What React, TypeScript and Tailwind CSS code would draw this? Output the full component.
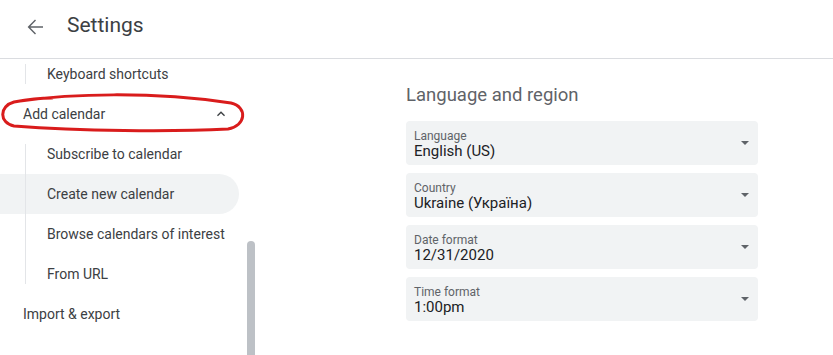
import React from "react"

const fields = [
  { label: "Language", value: "English (US)" },
  { label: "Country", value: "Ukraine (Україна)" },
  { label: "Date format", value: "12/31/2020" },
  { label: "Time format", value: "1:00pm" },
]

const addCalendarItems = [
  "Subscribe to calendar",
  "Create new calendar",
  "Browse calendars of interest",
  "From URL",
]

const BackArrow = () => (
  <svg width="24" height="24" viewBox="0 0 24 24" fill="#5f6368">
    <path d="M20 11.2H7.4l5.6-5.6L12 4.6 4.6 12l7.4 7.4 1-1-5.6-5.6H20v-1.6z" />
  </svg>
)

const ChevronUp = () => (
  <svg width="16" height="16" viewBox="0 0 24 24" fill="#3c4043">
    <path d="M12 8l-6 6 1.41 1.41L12 10.83l4.59 4.58L18 14z" />
  </svg>
)

const DropArrow = () => (
  <svg width="8" height="4" viewBox="0 0 10 5" fill="#5f6368">
    <path d="M0 0l5 5 5-5z" />
  </svg>
)

const SubGroup = ({ children }: { children: React.ReactNode }) => (
  <div className="relative">
    <div className="absolute left-[25px] top-[10px] bottom-[10px] w-px bg-[#e3e5e8] z-10" />
    {children}
  </div>
)

const SubItem = ({ label, active }: { label: string; active?: boolean }) => (
  <div
    className={
      "h-10 w-[239px] flex items-center pl-[47px] text-sm text-[#3c4043] " +
      (active ? "bg-[#f1f3f4] rounded-r-[20px]" : "")
    }
  >
    {label}
  </div>
)

const Field = ({ label, value }: { label: string; value: string }) => (
  <div className="h-11 w-[352px] bg-[#f1f3f4] rounded flex items-center justify-between pl-2 pr-[9px]">
    <div className="flex flex-col self-start pt-[8px]">
      <span className="text-xs leading-[14px] text-[#5f6368]">{label}</span>
      <span className="text-[15px] leading-4 text-[#202124]">{value}</span>
    </div>
    <DropArrow />
  </div>
)

export default function App() {
  return (
    <div className="relative w-[833px] h-[355px] overflow-hidden bg-white font-['Roboto',sans-serif]">
      <header className="h-[59px] border-b border-[#dadce0] flex items-center">
        <div className="ml-[23px] mt-[-5px]">
          <BackArrow />
        </div>
        <h1 className="ml-[20px] mt-[-6px] text-[21px] text-[#3c4043]">Settings</h1>
      </header>

      <div className="flex h-[296px]">
        <nav className="w-[247px] overflow-hidden">
          <div className="mt-[-5px]">
            <SubGroup>
              <SubItem label="Keyboard shortcuts" />
            </SubGroup>
            <div className="h-10 w-[239px] flex items-center justify-between pl-[23px] pr-[10px] text-sm text-[#3c4043]">
              <span>Add calendar</span>
              <ChevronUp />
            </div>
            <SubGroup>
              {addCalendarItems.map((item) => (
                <SubItem key={item} label={item} active={item === "Create new calendar"} />
              ))}
            </SubGroup>
            <div className="h-10 flex items-center pl-[23px] text-sm text-[#3c4043]">
              Import &amp; export
            </div>
          </div>
        </nav>
        <div className="w-[8px] pt-[182px]">
          <div className="h-full bg-[#bdc1c6] rounded-t-[4px]" />
        </div>

        <main className="flex-1 pl-[151px] pt-[24px]">
          <h2 className="text-[18.5px] leading-6 text-[#5f6368]">Language and region</h2>
          <div className="mt-[14px] flex flex-col gap-2">
            {fields.map((f) => (
              <Field key={f.label} {...f} />
            ))}
          </div>
        </main>
      </div>

      <svg
        className="absolute left-0 top-0 pointer-events-none"
        width="250"
        height="140"
        viewBox="0 0 250 140"
        fill="none"
      >
        <path
          d="M20 101 C 70 94, 150 91, 231 103 C 248 107, 246 126, 228 129 C 170 132, 80 131, 14 126 C -1 123, -1 106, 14 102 C 30 99, 40 98, 52 98"
          stroke="#d91c1c"
          strokeWidth="3"
          strokeLinecap="round"
          strokeLinejoin="round"
        />
      </svg>
    </div>
  )
}
